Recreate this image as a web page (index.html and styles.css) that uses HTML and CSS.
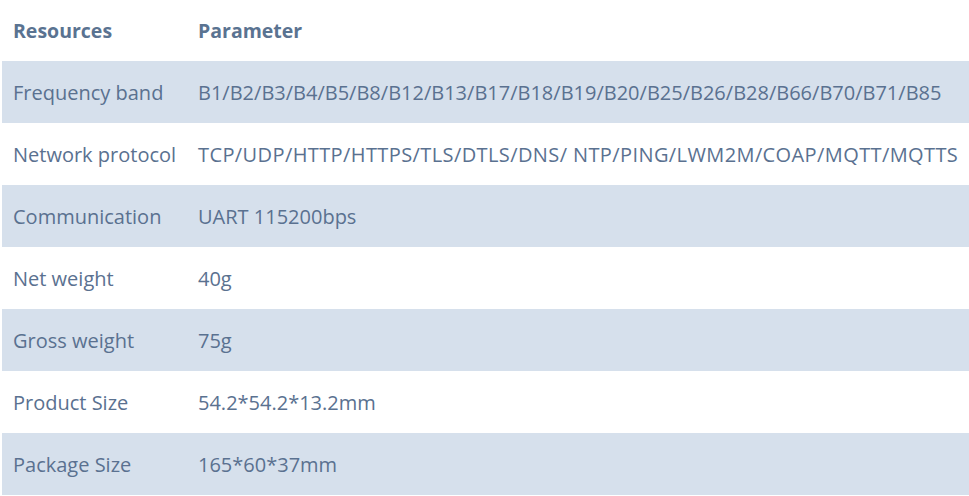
FILE: index.html
```html
<!DOCTYPE html>
<html>
<head>
<meta charset="utf-8">
<link rel="stylesheet" href="styles.css">
</head>
<body>
<div class="table">
  <div class="row head"><div class="c1">Resources</div><div class="c2">Parameter</div></div>
  <div class="row alt"><div class="c1">Frequency band</div><div class="c2">B1/B2/B3/B4/B5/B8/B12/B13/B17/B18/B19/B20/B25/B26/B28/B66/B70/B71/B85</div></div>
  <div class="row"><div class="c1">Network protocol</div><div class="c2 wide">TCP/UDP/HTTP/HTTPS/TLS/DTLS/DNS/ NTP/PING/LWM2M/COAP/MQTT/MQTTS</div></div>
  <div class="row alt"><div class="c1">Communication</div><div class="c2">UART 115200bps</div></div>
  <div class="row"><div class="c1">Net weight</div><div class="c2">40g</div></div>
  <div class="row alt"><div class="c1">Gross weight</div><div class="c2">75g</div></div>
  <div class="row"><div class="c1">Product Size</div><div class="c2">54.2*54.2*13.2mm</div></div>
  <div class="row alt"><div class="c1">Package Size</div><div class="c2">165*60*37mm</div></div>
</div>
</body>
</html>
```
FILE: styles.css
```css
html, body { margin: 0; padding: 0; background: #fff; }
body { font-family: "Open Sans", sans-serif; font-size: 20px; color: #5a7190; overflow: hidden; }
.table { padding-left: 2px; }
.row { display: grid; grid-template-columns: 196px 1fr; height: 62px; align-items: center; white-space: nowrap; }
.row.head { height: 61px; font-weight: 700; color: #5a7391; font-size: 19.5px; }
.row.alt { background: #d6e0ec; }
.c1 { padding-left: 11px; }
.wide { letter-spacing: 0.4px; }
```
